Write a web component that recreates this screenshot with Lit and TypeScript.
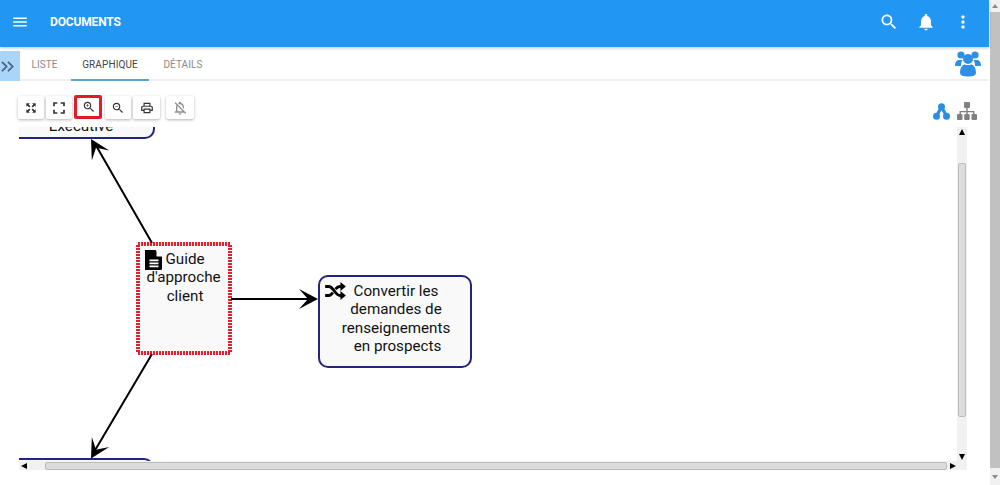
import { LitElement, html, css, svg } from "lit";
import { customElement } from "lit/decorators.js";

const P = {
  menu: "M3 18h18v-2H3v2zm0-5h18v-2H3v2zm0-7v2h18V6H3z",
  search: "M15.5 14h-.79l-.28-.27C15.41 12.59 16 11.11 16 9.5 16 5.91 13.09 3 9.5 3S3 5.91 3 9.5 5.91 16 9.5 16c1.61 0 3.09-.59 4.23-1.57l.27.28v.79l5 4.99L20.49 19l-4.99-5zm-6 0C7.01 14 5 11.99 5 9.5S7.01 5 9.5 5 14 7.01 14 9.5 11.99 14 9.5 14z",
  bell: "M12 22c1.1 0 2-.9 2-2h-4c0 1.1.89 2 2 2zm6-6v-5c0-3.07-1.64-5.64-4.5-6.32V4c0-.83-.67-1.5-1.5-1.5s-1.5.67-1.5 1.5v.68C7.63 5.36 6 7.92 6 11v5l-2 2v1h16v-1l-2-2z",
  more: "M12 8c1.1 0 2-.9 2-2s-.9-2-2-2-2 .9-2 2 .9 2 2 2zm0 2c-1.1 0-2 .9-2 2s.9 2 2 2 2-.9 2-2-.9-2-2-2zm0 6c-1.1 0-2 .9-2 2s.9 2 2 2 2-.9 2-2-.9-2-2-2z",
  expand: "M4 4h6L8 6l3 3-2 2-3-3-2 2V4zm16 0v6l-2-2-3 3-2-2 3-3-2-2h6zM4 20v-6l2 2 3-3 2 2-3 3 2 2H4zm16 0h-6l2-2-3-3 2-2 3 3 2-2v6z",
  full: "M7 14H5v5h5v-2H7v-3zm-2-4h2V7h3V5H5v5zm12 7h-3v2h5v-5h-2v3zM14 5v2h3v3h2V5h-5z",
  zoomin: "M15.5 14h-.79l-.28-.27C15.41 12.59 16 11.11 16 9.5 16 5.91 13.09 3 9.5 3S3 5.91 3 9.5 5.91 16 9.5 16c1.61 0 3.09-.59 4.23-1.57l.27.28v.79l5 4.99L20.49 19l-4.99-5zm-6 0C7.01 14 5 11.99 5 9.5S7.01 5 9.5 5 14 7.01 14 9.5 11.99 14 9.5 14zM12 10h-2v2H9v-2H7V9h2V7h1v2h2v1z",
  zoomout: "M15.5 14h-.79l-.28-.27C15.41 12.59 16 11.11 16 9.5 16 5.91 13.09 3 9.5 3S3 5.91 3 9.5 5.91 16 9.5 16c1.61 0 3.09-.59 4.23-1.57l.27.28v.79l5 4.99L20.49 19l-4.99-5zm-6 0C7.01 14 5 11.99 5 9.5S7.01 5 9.5 5 14 7.01 14 9.5 11.99 14 9.5 14zM7 9h5v1H7V9z",
  print: "M19 8h-1V3H6v5H5c-1.66 0-3 1.34-3 3v6h4v4h12v-4h4v-6c0-1.66-1.34-3-3-3zM8 5h8v3H8V5zm8 14H8v-4h8v4zm2-4v-2H6v2H4v-4c0-.55.45-1 1-1h14c.55 0 1 .45 1 1v4h-2z",
  belloff: "M12 22c1.1 0 2-.9 2-2h-4c0 1.1.9 2 2 2zm0-15.5c2.49 0 4 2.02 4 4.5v.1l2 2V11c0-3.07-1.63-5.64-4.5-6.32V4c0-.83-.67-1.5-1.5-1.5s-1.5.67-1.5 1.5v.68c-.49.12-.95.3-1.37.52l1.62 1.62c.27-.07.56-.12.87-.12zM5.41 3.35L4 4.76l2.81 2.81C6.29 8.57 6 9.74 6 11v5l-2 2v1h14.24l1.74 1.74 1.41-1.41L5.41 3.35zM16 17H8v-6c0-.68.12-1.32.34-1.9L16 16.76V17z",
};

const icon = (d: string, cls = "") =>
  html`<svg class=${cls} viewBox="0 0 24 24" aria-hidden="true"><path d=${d}></path></svg>`;

const arrowHead = (x: number, y: number, deg: number) =>
  svg`<path transform="translate(${x} ${y}) rotate(${deg})" d="M0 0L-19 -10L-10 0L-19 10Z" fill="#000"></path>`;

@customElement("app-root")
export class AppRoot extends LitElement {
  static styles = css`
    :host { display: flex; width: 1000px; height: 485px; background: #fff; overflow: hidden;
      font-family: Roboto, "Liberation Sans", sans-serif; }
    .page { flex: 1; min-width: 0; display: flex; flex-direction: column; }
    .outer-bar { width: 10px; margin-left: 1px; display: flex; flex-direction: column; align-items: center;
      background: #f1f1f1; box-sizing: border-box; }
    .outer-cap { height: 12px; flex: none; display: flex; align-items: center; justify-content: center; }
    .outer-cap.end { height: 17px; }
    .outer-thumb { flex: 1; width: 100%; background: #c1c1c1; }
    .tri-u { width: 0; height: 0; border: 3px solid transparent; border-top: 0; border-bottom: 4px solid #8a8a8a; }
    .tri-d { width: 0; height: 0; border: 3px solid transparent; border-bottom: 0; border-top: 4px solid #8a8a8a; }
    .appbar { height: 47px; flex: none; background: #2196f3; color: #fff; display: flex; align-items: center;
      padding: 0 16px 3px 11px; box-shadow: 0 1px 3px rgba(0,0,0,.25); position: relative; box-sizing: border-box; }
    .appbar svg { width: 20px; height: 20px; fill: #fff; display: block; }
    .appbar .menu { width: 18px; height: 18px; }
    .title { margin-left: 21px; font-size: 12px; font-weight: 700; letter-spacing: -.15px; flex: 1; }
    .actions { display: flex; gap: 17px; align-items: center; }
    .tabs-row { height: 34px; flex: none; display: flex; align-items: stretch; }
    .toggle { width: 20px; margin-top: 4px; background: #a9d5f8; display: flex; align-items: center;
      justify-content: flex-start; padding-left: 1px; box-sizing: border-box; flex: none; }
    .toggle svg { width: 13px; height: 13px; fill: none; stroke: #46657f; stroke-width: 1.9; }
    .tabs { flex: 1; display: flex; border-bottom: 2px solid #f0f0f0; align-items: stretch; }
    .tab { font-size: 10px; color: #8a8a8a; display: flex; align-items: center; justify-content: center; margin-bottom: -2px;
      border-bottom: 2px solid transparent; letter-spacing: .1px; padding-top: 3px; box-sizing: border-box; }
    .tab.liste { width: 51px; padding-right: 2px; }
    .tab.active { width: 78px; color: #444; border-bottom-color: #5ba6cc; }
    .tab.details { width: 68px; }
    .users { margin-left: auto; width: 28px; height: 28px; margin-right: 7px; margin-top: 3px; align-self: flex-start; fill: #2e8fe6; }
    .toolbar { height: 46px; flex: none; display: flex; align-items: flex-start; padding: 15px 0 0 18px; box-sizing: border-box; }
    .btn { width: 26px; height: 23px; margin-right: 2px; background: #fff; border-radius: 2px; display: flex; align-items: center;
      justify-content: center; box-shadow: 0 1px 3px rgba(0,0,0,.3); box-sizing: border-box; flex: none; }
    .btn svg { width: 14px; height: 14px; fill: #333; display: block; }
    .btn.big svg { width: 20px; height: 20px; }
    .btn.sel { width: 28px; height: 24px; margin-top: -1px; margin-right: 3px; border: 3px solid #e11b2a; box-shadow: none; }
    .btn.sel svg { margin-left: 1px; }
    .btn.gap { margin-left: 4px; width: 28px; }
    .btn.print { width: 27px; }
    .btn.off svg { fill: #8d8d8d; width: 16px; height: 16px; }
    .views { margin-left: auto; display: flex; align-items: center; gap: 7px; margin-right: 12px; margin-top: 6px; }
    .hub { width: 17px; height: 17px; }
    .sitemap { width: 20px; height: 18px; }
    .canvas { margin-left: 19px; width: 948px; height: 343px; display: grid; grid-template-columns: 938px 10px; grid-template-rows: 334px 9px; flex: none; }
    .view { position: relative; overflow: hidden; background: #fff; }
    .edges { position: absolute; inset: 0; width: 100%; height: 100%; }
    .node { position: absolute; box-sizing: border-box; background: #f9f9f9; color: #111; font-size: 15.2px; line-height: 18.4px; text-align: center; }
    .exec { left: -12px; top: -61px; width: 148px; height: 73px; border: 2px solid #24247c; border-radius: 10px; padding-top: 49px; }
    .bottom { left: -12px; top: 331px; width: 147px; height: 70px; border: 2px solid #24247c; border-radius: 10px; }
    .guide { left: 117px; top: 115px; width: 96px; height: 113px; padding: 8px 6px 8px 5px; }
    .frame { position: absolute; inset: 0; width: 100%; height: 100%; }
    .doc { width: 18px; height: 20px; position: absolute; left: 9px; top: 8px; }
    .conv { left: 299px; top: 148px; width: 154px; height: 93px; border: 2px solid #24247c; border-radius: 10px; padding: 5px 9px 4px 11px; }
    .conv svg { position: absolute; left: 5px; top: 5px; width: 21px; height: 18px; }
    .line { display: block; white-space: nowrap; }
    .line.shift { padding-left: 3px; }
    .vbar { background: #f1f1f1; display: flex; flex-direction: column; align-items: center; }
    .cap { height: 9px; flex: none; display: flex; align-items: center; justify-content: center; }
    .tri-b-u { width: 0; height: 0; border: 3.5px solid transparent; border-top: 0; border-bottom: 6px solid #000; }
    .tri-b-d { width: 0; height: 0; border: 3.5px solid transparent; border-bottom: 0; border-top: 6px solid #000; }
    .tri-b-l { width: 0; height: 0; border: 3.5px solid transparent; border-left: 0; border-right: 6px solid #000; }
    .tri-b-r { width: 0; height: 0; border: 3.5px solid transparent; border-right: 0; border-left: 6px solid #000; }
    .vspace-a { height: 27px; flex: none; }
    .vthumb { width: 8px; height: 254px; flex: none; background: #dcdcdc; border: 1px solid #bcbcbc; border-radius: 2px; box-sizing: border-box; }
    .spacer { flex: 1; }
    .hbar { background: #f1f1f1; display: flex; align-items: center; }
    .hcap { width: 9px; flex: none; display: flex; align-items: center; justify-content: center; height: 100%; }
    .hspace-a { width: 17px; flex: none; }
    .hthumb { height: 8px; width: 902px; flex: none; background: #dcdcdc; border: 1px solid #bcbcbc; border-radius: 2px; box-sizing: border-box; }
    .corner { background: #f1f1f1; }
  `;

  render() {
    return html`
      <div class="page">
        <header class="appbar">
          ${icon(P.menu, "menu")}
          <div class="title">DOCUMENTS</div>
          <div class="actions">${icon(P.search)}${icon(P.bell)}${icon(P.more)}</div>
        </header>
        <div class="tabs-row">
          <div class="toggle">
            <svg viewBox="0 0 14 14"><path d="M1 2l5 5-5 5M7.5 2l5 5-5 5"></path></svg>
          </div>
          <nav class="tabs">
            <div class="tab liste">LISTE</div>
            <div class="tab active">GRAPHIQUE</div>
            <div class="tab details">DÉTAILS</div>
            <svg class="users" viewBox="0 0 28 28" aria-hidden="true">
              <circle cx="7" cy="5" r="3.6"></circle>
              <circle cx="21" cy="5" r="3.6"></circle>
              <path d="M1 15.5c0-3.5 2-5.5 4-5.5h3.5c-1 1.5-1.5 3-1.5 6H2.5C1.5 16 1 16 1 15.5z"></path>
              <path d="M27 15.5c0-3.5-2-5.5-4-5.5h-3.5c1 1.5 1.5 3 1.500 6h4.500c1 0 1.500 0 1.500-.5z"></path>
              <circle cx="14" cy="9" r="5"></circle>
              <path d="M6 23c0-6 3-8.5 5-8.5 1 .8 5 .8 6 0 2 0 5 2.5 5 8.5 0 2.5-3.5 3.500-8 3.500s-8-1-8-3.500z"></path>
            </svg>
          </nav>
        </div>
        <div class="toolbar">
          <div class="btn">${icon(P.expand)}</div>
          <div class="btn big">${icon(P.full)}</div>
          <div class="btn sel">${icon(P.zoomin)}</div>
          <div class="btn">${icon(P.zoomout)}</div>
          <div class="btn print">${icon(P.print)}</div>
          <div class="btn gap off">${icon(P.belloff)}</div>
          <div class="views">
            <svg class="hub" viewBox="0 0 17 17" aria-hidden="true">
              <path d="M8.5 4L3.5 13M8.5 4L13.5 13" stroke="#2a8de4" stroke-width="3.2" fill="none"></path>
              <circle cx="8.5" cy="3.8" r="3.5" fill="#2a8de4"></circle>
              <circle cx="3.5" cy="13.3" r="3.5" fill="#2a8de4"></circle>
              <circle cx="13.5" cy="13.3" r="3.5" fill="#2a8de4"></circle>
            </svg>
            <svg class="sitemap" viewBox="0 0 20 18" aria-hidden="true" fill="#808080">
              <rect x="7" y="0" width="6" height="6" rx="1"></rect>
              <rect x="0" y="12" width="5.5" height="6" rx="1"></rect>
              <rect x="7.2" y="12" width="5.5" height="6" rx="1"></rect>
              <rect x="14.5" y="12" width="5.5" height="6" rx="1"></rect>
              <path d="M9.3 6h1.4v3H17.5v3h-1.4v-1.7H10.7V12H9.3v-1.7H3.900V12H2.500V9h6.800z"></path>
            </svg>
          </div>
        </div>
        <div class="canvas">
          <div class="view">
            <div class="node exec">Executive</div>
            <div class="node bottom"></div>
            <div class="node guide">
              <svg class="frame" viewBox="0 0 96 113" aria-hidden="true">
                <rect x="2" y="2" width="92" height="109" fill="none" stroke="#e0202c" stroke-width="4" stroke-dasharray="2 1"></rect>
              </svg>
              <svg class="doc" viewBox="0 0 18 20" aria-hidden="true">
                <path fill="#000" d="M1.5 0H10.5L17 6.5V18.5a1.5 1.5 0 0 1-1.5 1.5H1.5A1.5 1.5 0 0 1 0 18.5V1.5A1.5 1.5 0 0 1 1.500 0z"></path>
                <path fill="#000" d="M0 0h4v20H0z"></path>
                <path fill="#fff" d="M11.5 0L18 6.5H11.5z M4.5 9.5h9v1.7h-9z M4.5 12.5h9v1.7h-9z M4.5 15.5h9v1.7h-9z"></path>
              </svg>
              <span class="line shift">Guide</span>
              <span class="line">d'approche</span>
              <span class="line shift">client</span>
            </div>
            <div class="node conv">
              <svg viewBox="0 0 23 20" aria-hidden="true" fill="none" stroke="#000" stroke-width="3.2">
                <path d="M0 5h4c5.500 0 7 10 12.500 10h2"></path>
                <path d="M0 15h4c2 0 3.400-1.500 4.500-3.300M11.500 8c1.300-1.700 2.800-3 5-3h2"></path>
                <path d="M17 0l6 5-6 5zM17 10l6 5-6 5z" fill="#000" stroke="none"></path>
              </svg>
              <span class="line">Convertir les</span>
              <span class="line">demandes de</span>
              <span class="line">renseignements</span>
              <span class="line shift">en prospects</span>
            </div>
            <svg class="edges" viewBox="0 0 938 334" aria-hidden="true">
              <path d="M133 116L75 15M212 172H290M133 227L75 325" stroke="#000" stroke-width="2" fill="none"></path>
              ${arrowHead(72, 12, -120)}
              ${arrowHead(299, 172, 0)}
              ${arrowHead(72, 331.5, 120)}
            </svg>
          </div>
          <div class="vbar">
            <div class="cap"><div class="tri-b-u"></div></div>
            <div class="vspace-a"></div>
            <div class="vthumb"></div>
            <div class="spacer"></div>
            <div class="cap"><div class="tri-b-d"></div></div>
          </div>
          <div class="hbar">
            <div class="hcap"><div class="tri-b-l"></div></div>
            <div class="hspace-a"></div>
            <div class="hthumb"></div>
            <div class="spacer"></div>
            <div class="hcap"><div class="tri-b-r"></div></div>
          </div>
          <div class="corner"></div>
        </div>
      </div>
      <aside class="outer-bar">
        <div class="outer-cap"><div class="tri-u"></div></div>
        <div class="outer-thumb"></div>
        <div class="outer-cap end"><div class="tri-d"></div></div>
      </aside>
    `;
  }
}
